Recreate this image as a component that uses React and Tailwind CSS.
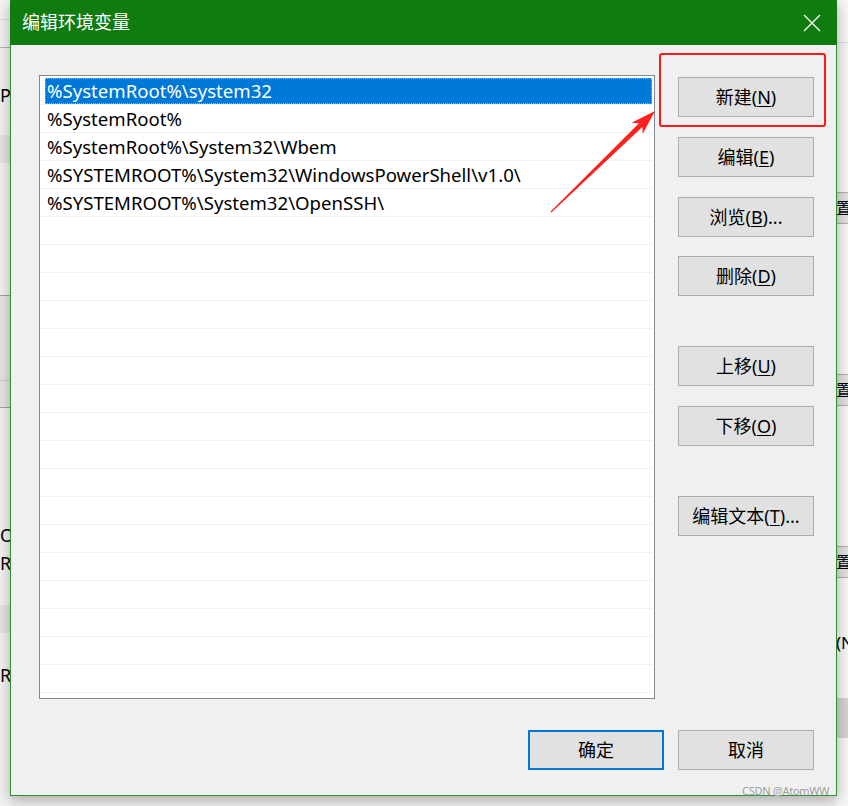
import React from "react";

const paths = [
  "%SystemRoot%\\system32",
  "%SystemRoot%",
  "%SystemRoot%\\System32\\Wbem",
  "%SYSTEMROOT%\\System32\\WindowsPowerShell\\v1.0\\",
  "%SYSTEMROOT%\\System32\\OpenSSH\\",
];

const sideButtons = [
  { label: "新建", key: "N", mt: "mt-0" },
  { label: "编辑", key: "E", mt: "mt-[20px]" },
  { label: "浏览", key: "B", tail: "...", mt: "mt-[20px]" },
  { label: "删除", key: "D", mt: "mt-[19px]" },
  { label: "上移", key: "U", mt: "mt-[50px]" },
  { label: "下移", key: "O", mt: "mt-[20px]" },
  { label: "编辑文本", key: "T", tail: "...", mt: "mt-[50px]" },
];

const WinButton = ({ label, hotkey, tail, primary, className = "" }) => (
  <button
    className={`w-[136px] h-[40px] flex items-center justify-center text-[18px] text-black ${
      primary
        ? "bg-[#e1e1e1] border-2 border-[#0078d7]"
        : "bg-[#e1e1e1] border border-[#adadad]"
    } ${className}`}
  >
    {label}
    {hotkey && (
      <span>
        (<span className="underline underline-offset-2">{hotkey}</span>)
      </span>
    )}
    {tail}
  </button>
);

const App = () => {
  const rows = Array.from({ length: 23 }, (_, i) => paths[i] || "");

  return (
    <div
      className="relative w-[848px] h-[806px] overflow-hidden bg-[#f0f0f0]"
      style={{ fontFamily: '"Noto Sans", "Noto Sans CJK SC", sans-serif' }}
    >
      {/* window behind the dialog */}
      <div className="absolute inset-0 flex">
        <div className="w-[11px] h-full flex flex-col bg-[#f3f3f3] overflow-hidden">
          <div className="h-[20px] border-b border-[#dcdcdc]" />
          <div className="h-[28px] border-b border-[#b5b5b5]" />
          <div className="h-[32px]" />
          <div className="h-[30px] text-[18px] leading-[30px] text-black whitespace-nowrap">P/</div>
          <div className="h-[25px]" />
          <div className="h-[28px] bg-[#e4e4e4]" />
          <div className="h-[132px]" />
          <div className="h-[85px] bg-[#e6e6e6] border-t border-[#a0a0a0]" />
          <div className="h-[27px] bg-[#e6e6e6] border-t border-[#cfcfcf]" />
          <div className="h-[114px] border-t border-[#a0a0a0]" />
          <div className="h-[28px] text-[18px] leading-[28px]">O</div>
          <div className="h-[28px] text-[18px] leading-[28px]">R</div>
          <div className="h-[28px]" />
          <div className="h-[28px] bg-[#e4e4e4]" />
          <div className="h-[28px]" />
          <div className="h-[28px] text-[18px] leading-[28px] text-black">R</div>
        </div>
        <div className="flex-1" />
        <div className="w-[12px] h-full flex flex-col bg-[#f7f7f7] overflow-hidden">
          <div className="h-[42px]" />
          <div className="h-[150px] border-t border-[#dcdcdc]" />
          <div className="h-[32px] bg-[#e1e1e1] border-y border-[#b0b0b0] text-[16px] leading-[30px] whitespace-nowrap">置</div>
          <div className="h-[150px]" />
          <div className="h-[32px] bg-[#e1e1e1] border-y border-[#b0b0b0] text-[16px] leading-[30px] whitespace-nowrap">置</div>
          <div className="h-[140px]" />
          <div className="h-[32px] bg-[#e1e1e1] border-y border-[#b0b0b0] text-[16px] leading-[30px] whitespace-nowrap">置</div>
          <div className="h-[50px]" />
          <div className="h-[30px] text-[17px] leading-[30px] whitespace-nowrap">(N</div>
          <div className="h-[40px]" />
          <div className="h-[40px] bg-[#d4d4d4]" />
        </div>
      </div>

      {/* dialog */}
      <div className="absolute left-[10px] top-0 w-[827px] h-[796px] flex flex-col bg-[#f0f0f0] border border-t-0 border-[#2f8f2f] shadow-[0_4px_14px_rgba(0,0,0,0.3)]">
        <div className="h-[45px] bg-[#107c10] flex items-center justify-between pl-[12px] pr-[12px] -mx-px">
          <span className="text-white text-[18px]">编辑环境变量</span>
          <svg width="18" height="18" viewBox="0 0 18 18" className="mr-[4px]">
            <path d="M1 1 L17 17 M17 1 L1 17" stroke="white" strokeWidth="1.3" />
          </svg>
        </div>

        <div className="flex-1 flex flex-col px-[22px]">
          <div className="flex pt-[30px] pl-[6px]">
            <div className="w-[617px] h-[624px] border border-[#828790] bg-white overflow-hidden pt-px px-px">
              {rows.map((text, i) => (
                <div
                  key={i}
                  className="h-[28px] border-b border-[#f0f0f0] flex items-center text-[18.6px] text-black whitespace-nowrap"
                >
                  {i === 0 ? (
                    <div className="ml-[4px] mr-[1px] w-full h-[26px] bg-[#0078d7] text-white flex items-center pl-[2px] outline-1 outline-dotted outline-[#e9a849] -outline-offset-1">
                      {text}
                    </div>
                  ) : (
                    <span className="pl-[6px]">{text}</span>
                  )}
                </div>
              ))}
            </div>

            <div className="ml-[23px] pt-[2px] flex flex-col">
              {sideButtons.map((b) => (
                <WinButton
                  key={b.key}
                  label={b.label}
                  hotkey={b.key}
                  tail={b.tail}
                  className={b.mt}
                />
              ))}
            </div>
          </div>

          <div className="flex justify-end gap-[14px] mt-[31px] pr-0">
            <WinButton label="确定" primary />
            <WinButton label="取消" />
          </div>
        </div>
      </div>

      {/* annotation: red box around the new button */}
      <div className="absolute left-[659px] top-[53px] w-[167px] h-[74px] border-2 border-[#ff1a1a] rounded-[3px]" />

      {/* annotation: red arrow */}
      <svg className="absolute left-0 top-0 pointer-events-none" width="848" height="806">
        <polygon
          points="550.6,211.6 638.9,123.3 631.5,122.7 655,111 642.7,134.1 642.4,126.9 551.4,212.4"
          fill="#ff2020"
        />
      </svg>

      <div
        className="absolute left-[742px] top-[783px] text-[11px] text-[#9a9a9a] tracking-tight"
        style={{ textShadow: "0 0 1px #fff" }}
      >
        CSDN @AtomWW
      </div>
    </div>
  );
};

export default App;
